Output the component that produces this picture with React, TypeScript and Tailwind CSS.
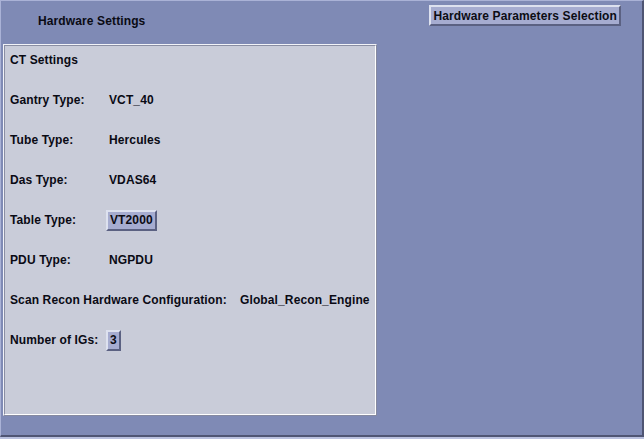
import React from 'react';

const font = { fontFamily: '"Liberation Sans", Arial, sans-serif' };

const MotifButton = ({ label, className = '' }: { label: string; className?: string }) => (
  <div
    className={`h-[21px] flex items-center px-[2px] bg-[#a6acd0] border-2 border-t-[#dde1ef] border-l-[#dde1ef] border-r-[#5b6182] border-b-[#5b6182] text-[12px] font-bold text-[#0c0c14] leading-none ${className}`}
  >
    {label}
  </div>
);

interface Row {
  label: string;
  value: string;
  labelWidth: string;
  button?: boolean;
}

const rows: Row[] = [
  { label: 'Gantry Type:', value: 'VCT_40', labelWidth: 'w-[99px]' },
  { label: 'Tube Type:', value: 'Hercules', labelWidth: 'w-[99px]' },
  { label: 'Das Type:', value: 'VDAS64', labelWidth: 'w-[99px]' },
  { label: 'Table Type:', value: 'VT2000', labelWidth: 'w-[96px]', button: true },
  { label: 'PDU Type:', value: 'NGPDU', labelWidth: 'w-[99px]' },
  { label: 'Scan Recon Hardware Configuration:', value: 'Global_Recon_Engine', labelWidth: 'w-[230px]' },
  { label: 'Number of IGs:', value: '3', labelWidth: 'w-[96px]', button: true },
];

const App = () => {
  return (
    <div className="w-[644px] h-[439px] flex flex-col bg-[#b9c0de] tracking-[0.12px]" style={font}>
      <div className="h-[437px] flex flex-col bg-[#7f8ab5] border-t border-l border-t-[#aab2d6] border-l-[#aab2d6] border-r-2 border-b-2 border-r-[#4f5573] border-b-[#4f5573]">
        {/* header */}
        <div className="h-[43px] flex items-start justify-between">
          <div className="pl-[37px] pt-[11px] text-[12px] font-bold text-[#0a0a14]">Hardware Settings</div>
          <MotifButton label="Hardware Parameters Selection" className="mt-[4px] mr-[21px] px-[1px]" />
        </div>

        {/* CT settings panel */}
        <div className="ml-[2px] w-[374px] h-[372px] border-t border-l border-t-[#f2f3f8] border-l-[#f2f3f8] border-r border-b border-r-[#868aa0] border-b-[#868aa0]">
          <div className="w-full h-full bg-[#c9ccd9] border-t border-l border-t-[#8a8ea3] border-l-[#8a8ea3] border-r border-b border-r-[#ffffff] border-b-[#ffffff] pl-[5px] flex flex-col gap-[12px] text-[12px] font-bold text-[#0a0a14]">
            <div className="h-[28px] flex items-center">CT Settings</div>
            {rows.map((r) => (
              <div key={r.label} className="h-[28px] flex items-center">
                <div className={`${r.labelWidth} shrink-0`}>{r.label}</div>
                {r.button ? <MotifButton label={r.value} /> : <div>{r.value}</div>}
              </div>
            ))}
          </div>
        </div>
      </div>
    </div>
  );
};

export default App;
